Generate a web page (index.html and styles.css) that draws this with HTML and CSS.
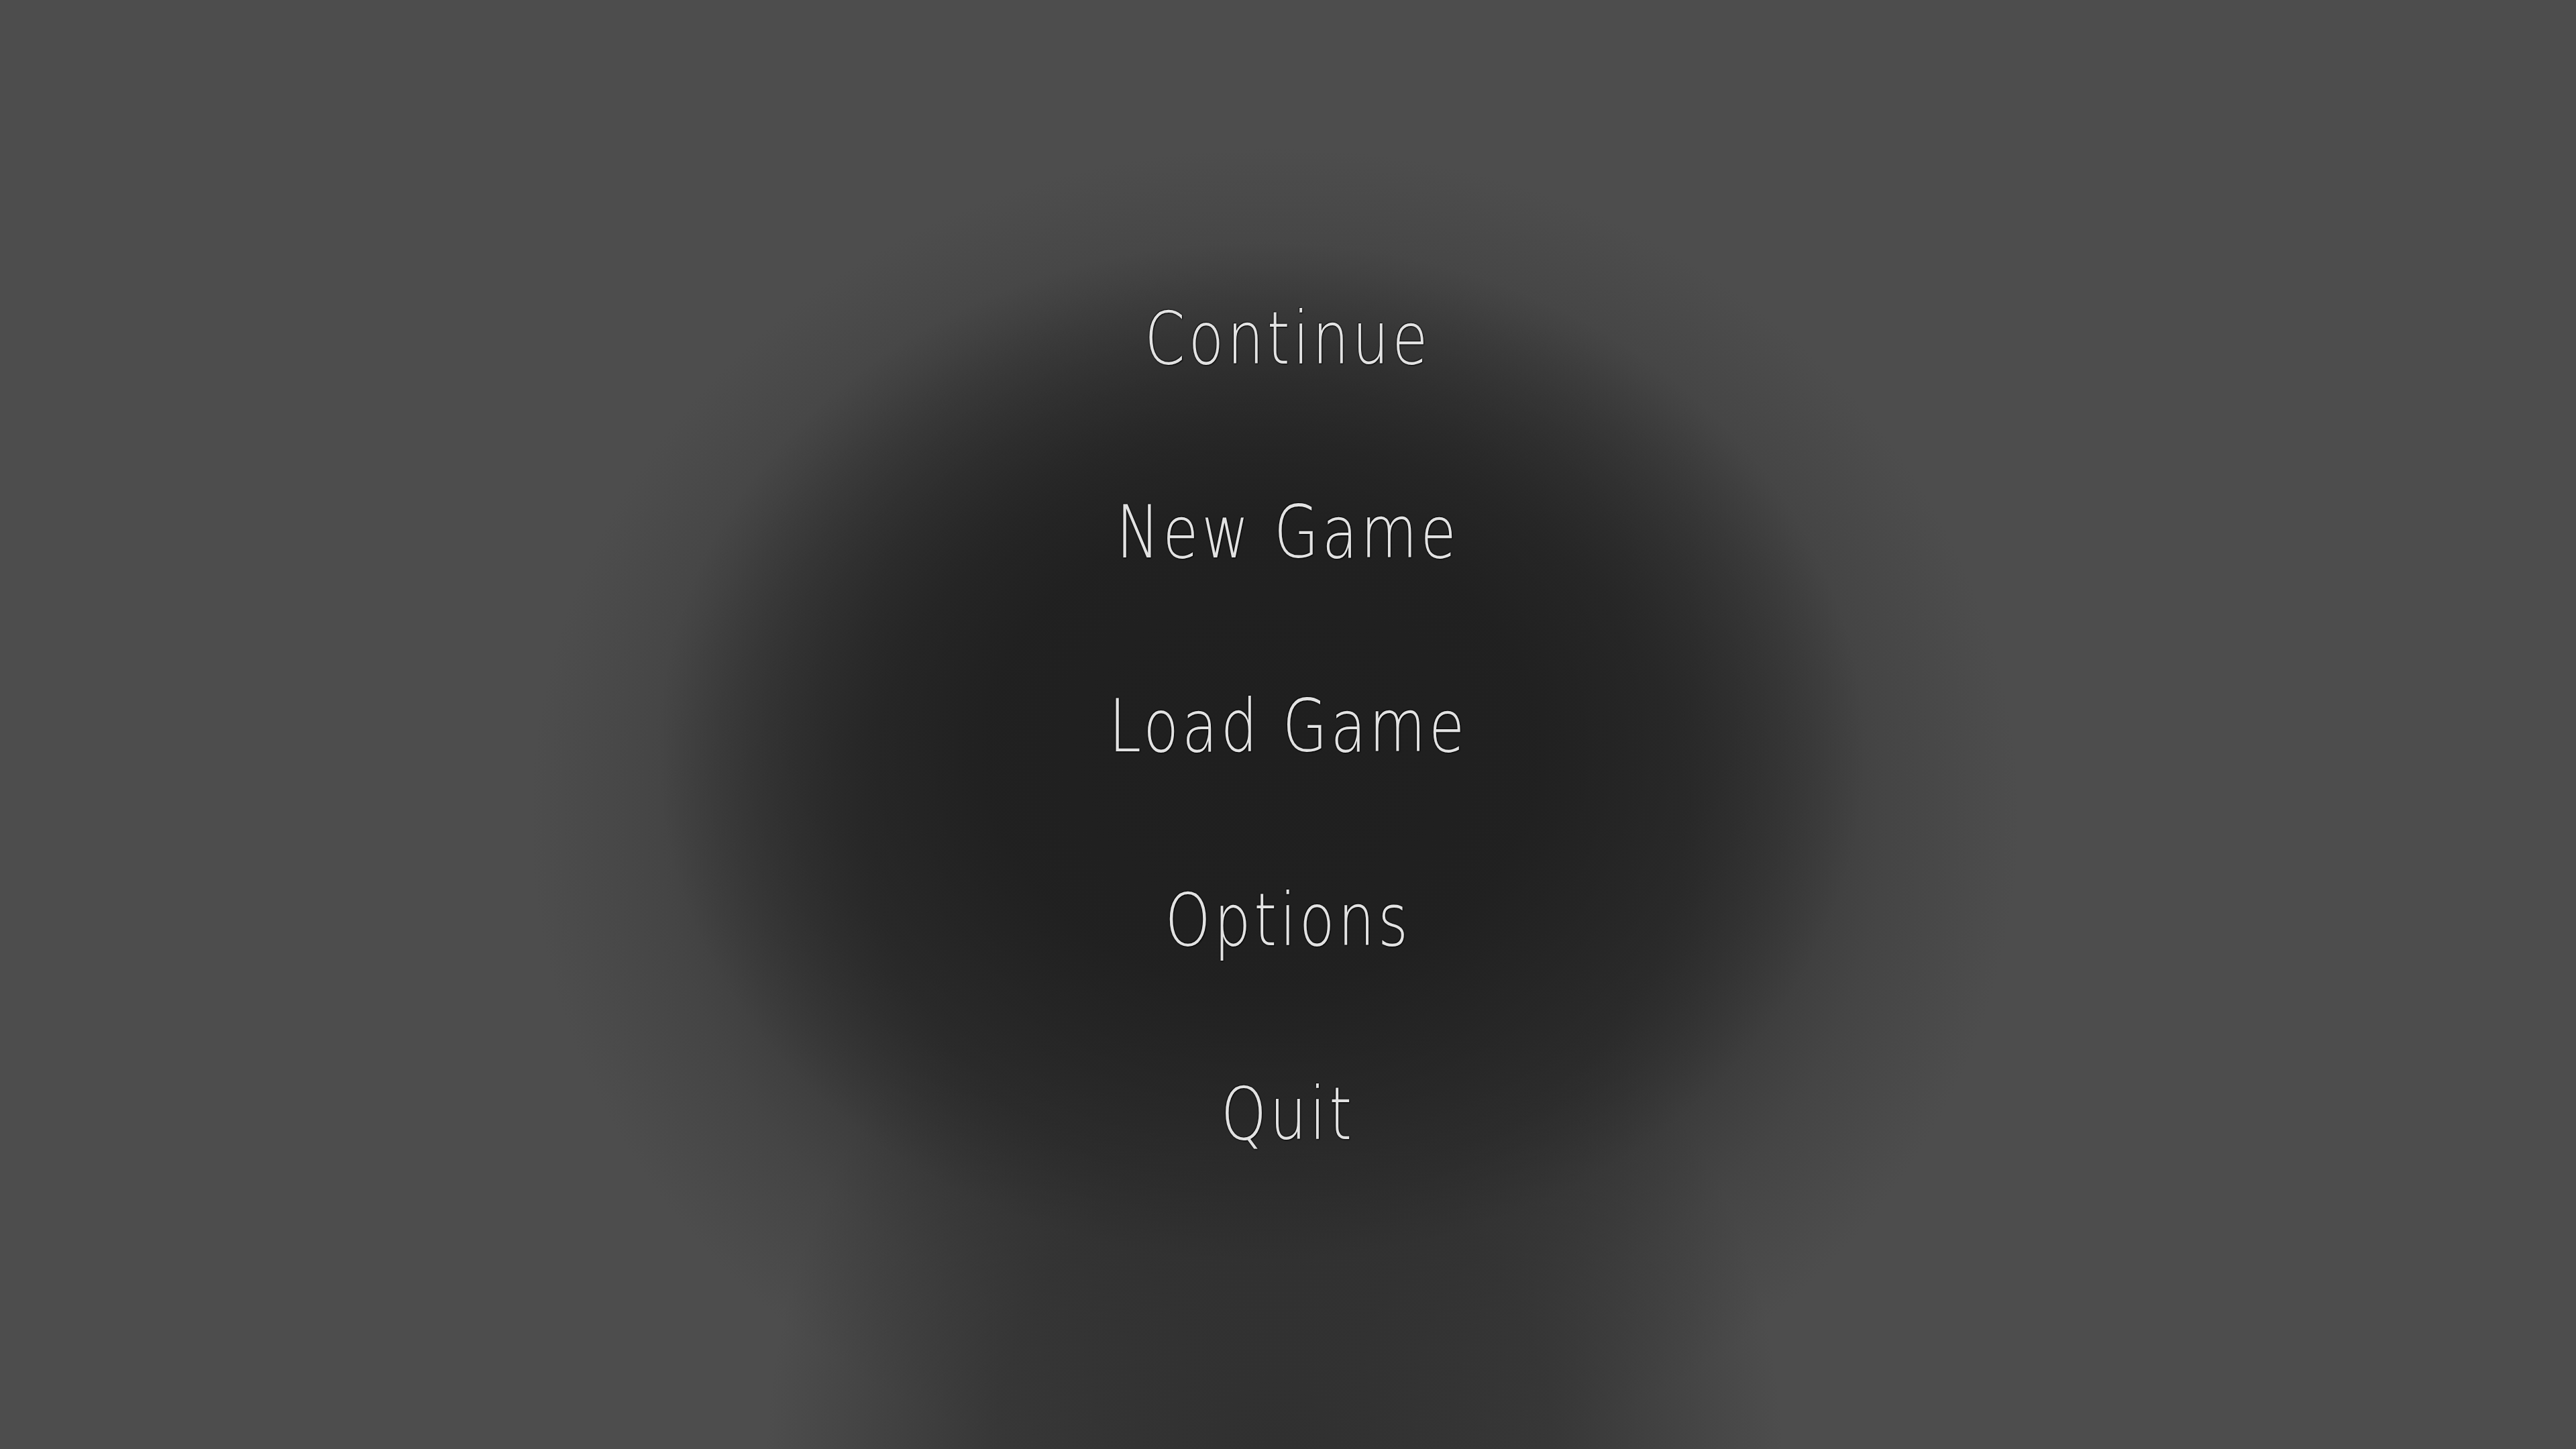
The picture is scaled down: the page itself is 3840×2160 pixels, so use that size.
FILE: index.html
```html
<!DOCTYPE html>
<html lang="en">
<head>
<meta charset="utf-8">
<title>Main Menu</title>
<link rel="stylesheet" href="styles.css">
</head>
<body>
<main class="screen">
  <nav class="menu">
    <a class="menu-item" href="#">Continue</a>
    <a class="menu-item" href="#">New Game</a>
    <a class="menu-item" href="#">Load Game</a>
    <a class="menu-item" href="#">Options</a>
    <a class="menu-item" href="#">Quit</a>
  </nav>
</main>
</body>
</html>
```
FILE: styles.css
```css
html, body {
  margin: 0;
  padding: 0;
  width: 3840px;
  height: 2160px;
  overflow: hidden;
}

body {
  background-color: #4d4d4d;
  font-family: "DejaVu Sans", "Liberation Sans", sans-serif;
}

.screen {
  width: 3840px;
  height: 2160px;
  box-sizing: border-box;
  background-color: #4d4d4d;
  background-image:
    radial-gradient(ellipse 900px 760px at 1880px 1120px, rgba(31,31,31,1) 0%, rgba(32,32,32,0.97) 45%, rgba(34,34,34,0) 100%),
    radial-gradient(ellipse 760px 900px at 1900px 2200px, rgba(46,46,46,0.95) 0%, rgba(48,48,48,0.75) 55%, rgba(77,77,77,0) 100%),
    radial-gradient(ellipse 1110px 1000px at 1900px 1220px, rgba(40,40,40,0.95) 0%, rgba(44,44,44,0.85) 55%, rgba(62,62,62,0.55) 82%, rgba(77,77,77,0) 100%);
  display: flex;
  justify-content: center;
  padding-top: 360px;
}

.menu {
  display: flex;
  flex-direction: column;
  align-items: center;
}

.menu-item {
  display: block;
  font-weight: 200;
  font-size: 108px;
  line-height: 289px;
  height: 289px;
  letter-spacing: 6px;
  color: #e2e2e2;
  text-decoration: none;
  white-space: nowrap;
  transform: scaleX(0.8);
  text-shadow:
    0 0 2px rgba(0,0,0,0.95),
    1px 1px 2px rgba(0,0,0,0.9),
    -1px -1px 1px rgba(0,0,0,0.6);
}
```
